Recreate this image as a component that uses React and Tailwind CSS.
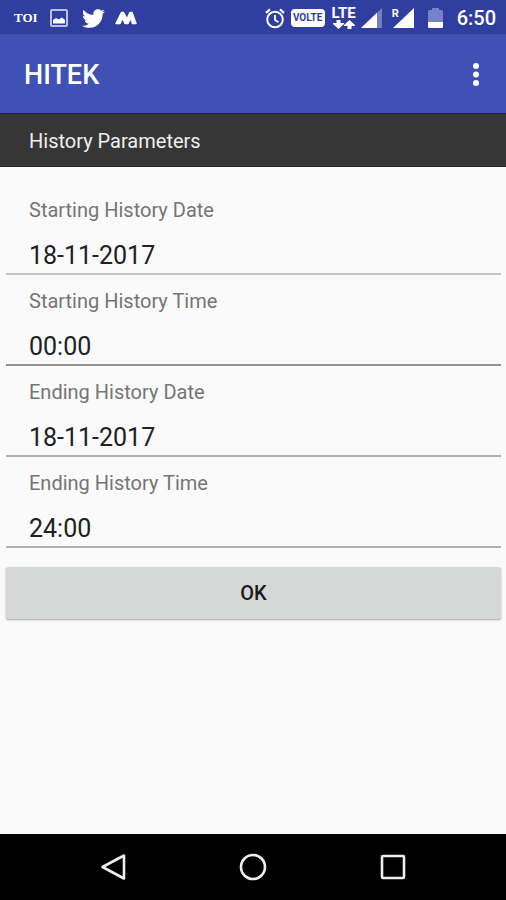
import React, { useState } from "react";
import { FaTwitter } from "react-icons/fa";

const fields = [
  { key: "start_date", label: "Starting History Date", line: "border-[#c4c4c4]" },
  { key: "start_time", label: "Starting History Time", line: "border-[#929292]" },
  { key: "end_date", label: "Ending History Date", line: "border-[#b0b0b0]" },
  { key: "end_time", label: "Ending History Time", line: "border-[#b0b0b0]" },
];

const PictureIcon = () => (
  <svg width="18" height="18" viewBox="0 0 18 18" className="mr-3.5">
    <rect x="1" y="1" width="16" height="16" rx="1" fill="none" stroke="#b9c0e6" strokeWidth="2" />
    <path d="M3 14.500V11l3-2 2.500 1.500 3.500-2 3 2.500v3.500z" fill="#fff" />
  </svg>
);

const MIcon = () => (
  <svg width="22" height="14" viewBox="0 0 22 14">
    <path
      d="M1 12.500L6.500 1.500h2L12 8l3-6.500h2L21 12.500h-3.500L15.500 7l-2.500 5.500h-3L7.500 7 5 12.500z"
      fill="#fff"
      stroke="#fff"
      strokeWidth="1.500"
      strokeLinejoin="round"
    />
  </svg>
);

const AlarmIcon = () => (
  <svg width="20" height="21" viewBox="0 0 20 21" fill="none" stroke="#fff" className="mr-1.5">
    <circle cx="10" cy="11.5" r="7.8" strokeWidth="2" />
    <path d="M10 7v5l3.5 2.2" strokeWidth="1.8" />
    <path d="M1 4.8L5 1.4M19 4.8L15 1.4" strokeWidth="2.2" />
  </svg>
);

const LteIcon = () => (
  <div className="mr-1 flex w-[26px] flex-col items-center">
    <span className="text-[15px] font-bold leading-[13px]">LTE</span>
    <svg width="22" height="9" viewBox="0 0 22 9" fill="#fff">
      <path d="M3.500 0h4v3H11v1L5.500 9 0 4V3h3.500z" />
      <path d="M16.500 0L22 5v1h-3.500v3h-4V6H11V5z" />
    </svg>
  </div>
);

const SignalIcon = () => (
  <svg width="21" height="20" viewBox="0 0 21 20" className="mr-2.5">
    <path d="M0 20L21 0v20z" fill="#7580c4" />
    <path d="M0 20L16 4.800V20z" fill="#fff" />
  </svg>
);

const RoamingSignalIcon = () => (
  <div className="relative mr-3.5">
    <svg width="22" height="20" viewBox="0 0 22 20">
      <path d="M1 20L22 0v20z" fill="#fff" />
    </svg>
    <span className="absolute left-0 top-0 text-[11px] font-bold leading-3">R</span>
  </div>
);

const BatteryIcon = () => (
  <svg width="15" height="20" viewBox="0 0 15 20" className="mr-3.5">
    <path d="M4 0h7v2h2.500q1.500 0 1.500 1.500V14H0V3.500Q0 2 1.500 2H4z" fill="#7681c6" />
    <path d="M0 14h15v4.500q0 1.500-1.500 1.500h-12Q0 20 0 18.500z" fill="#fff" />
  </svg>
);

const StatusBar = () => (
  <div className="flex h-[34px] items-center justify-between bg-[#303f9f] pl-3.5 pr-2.5 pt-0.5 text-white">
    <div className="flex items-center">
      <span className="mr-3 font-['Liberation_Serif',serif] text-[13px] font-bold leading-4">
        TOI
      </span>
      <PictureIcon />
      <FaTwitter className="mr-2.5" size={23} />
      <MIcon />
    </div>
    <div className="flex items-center">
      <AlarmIcon />
      <span className="mr-1.5 flex h-[18px] w-[34px] items-center justify-center rounded-sm bg-white text-[10px] font-bold leading-[10px] text-[#303f9f]">
        VOLTE
      </span>
      <LteIcon />
      <SignalIcon />
      <RoamingSignalIcon />
      <BatteryIcon />
      <span className="text-[20px] font-medium leading-6">6:50</span>
    </div>
  </div>
);

const AppBar = () => (
  <header className="flex h-[79px] items-center justify-between bg-[#3f51b5] pl-6 pr-4 pt-0.5 text-white">
    <h1 className="text-[27px] font-medium leading-8">HITEK</h1>
    <button type="button" aria-label="More options" className="px-2.5 py-2">
      <svg width="8" height="24" viewBox="0 0 8 24" fill="#fff">
        <circle cx="4" cy="3" r="3" />
        <circle cx="4" cy="11.500" r="3" />
        <circle cx="4" cy="20" r="3" />
      </svg>
    </button>
  </header>
);

const Field = ({ id, label, line, value, setValue }) => (
  <div className={`border-b-2 pt-3.5 ${line}`}>
    <label htmlFor={id} className="block px-[23px] text-[20px] leading-6 text-[#757575]">
      {label}
    </label>
    <input
      id={id}
      type="text"
      value={value}
      onChange={(e) => setValue(id, e.target.value)}
      className="mt-3.5 block h-[37px] w-full bg-transparent px-[23px] pt-0.5 text-[25px] text-[#212121] outline-none"
    />
  </div>
);

const NavigationBar = () => (
  <nav className="flex h-[66px] items-center justify-center gap-[100px] bg-black">
    <button type="button" aria-label="Back" className="px-1.5">
      <svg width="28" height="28" viewBox="0 0 28 28" fill="none" stroke="#eee" strokeWidth="2.600">
        <path d="M25 2.500v23L3.500 14z" strokeLinejoin="round" />
      </svg>
    </button>
    <button type="button" aria-label="Home" className="px-1.5">
      <svg width="28" height="28" viewBox="0 0 28 28" fill="none" stroke="#eee" strokeWidth="2.600">
        <circle cx="14" cy="14" r="12" />
      </svg>
    </button>
    <button type="button" aria-label="Recent apps" className="px-1.5">
      <svg width="28" height="28" viewBox="0 0 28 28" fill="none" stroke="#eee" strokeWidth="2.600">
        <rect x="3" y="3" width="22" height="22" rx="1" />
      </svg>
    </button>
  </nav>
);

const App = () => {
  const [params, setParams] = useState({
    start_date: "18-11-2017",
    start_time: "00:00",
    end_date: "18-11-2017",
    end_time: "24:00",
  });

  const setValue = (_key, _value) => {
    setParams({ ...params, [_key]: _value });
  };

  return (
    <div className="flex min-h-screen flex-col bg-[#fafafa] font-[Roboto,sans-serif]">
      <StatusBar />
      <AppBar />
      <h2 className="flex h-[54px] items-center border-y border-[#222] bg-[#363636] px-[29px] pt-0.5 text-[20px] leading-6 text-[#eee]">
        History Parameters
      </h2>
      <form
        className="flex-1 pl-1.5 pr-[5px] pt-[17px]"
        onSubmit={(e) => e.preventDefault()}
      >
        {fields.map((f) => (
          <Field
            key={f.key}
            id={f.key}
            label={f.label}
            line={f.line}
            value={params[f.key]}
            setValue={setValue}
          />
        ))}
        <button
          type="submit"
          className="mt-[19px] h-[52px] w-full rounded-xs bg-[#d6d7d7] text-[20px] font-medium text-[#1c1c1c] shadow-[0_1px_2px_rgba(0,0,0,0.35)]"
        >
          OK
        </button>
      </form>
      <NavigationBar />
    </div>
  );
};

export default App;
